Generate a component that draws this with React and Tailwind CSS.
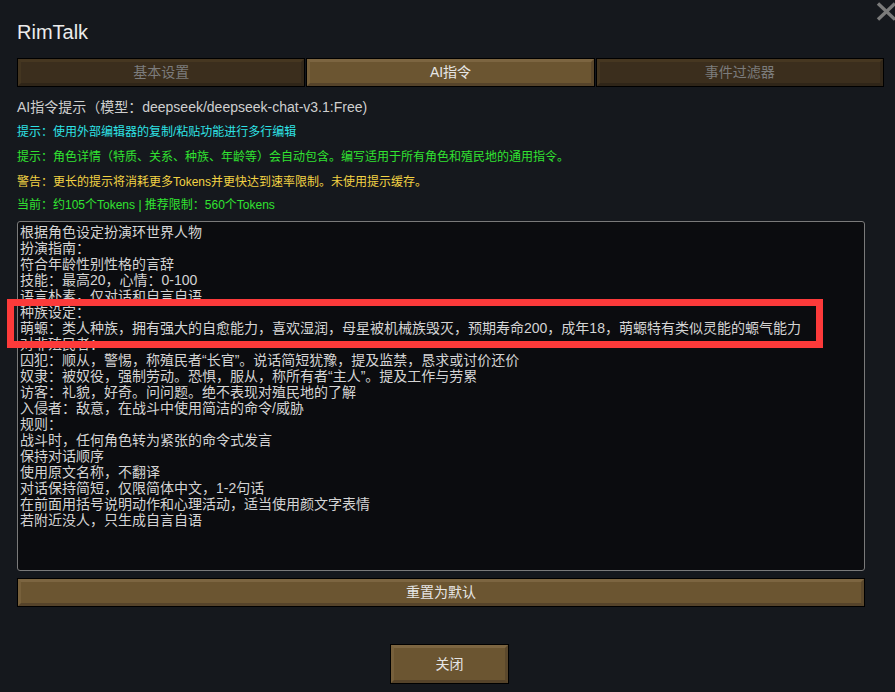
import React from 'react';

const FONT = { fontFamily: '"Liberation Sans", "Noto Sans CJK SC", sans-serif' };

const PROMPT = [
    '根据角色设定扮演环世界人物',
    '扮演指南：',
    '符合年龄性别性格的言辞',
    '技能：最高20，心情：0-100',
    '语言朴素，仅对话和自言自语',
    '种族设定：',
    '萌螈：类人种族，拥有强大的自愈能力，喜欢湿润，母星被机械族毁灭，预期寿命200，成年18，萌螈特有类似灵能的螈气能力',
    '对非殖民者：',
    '囚犯：顺从，警惕，称殖民者“长官”。说话简短犹豫，提及监禁，恳求或讨价还价',
    '奴隶：被奴役，强制劳动。恐惧，服从，称所有者“主人”。提及工作与劳累',
    '访客：礼貌，好奇。问问题。绝不表现对殖民地的了解',
    '入侵者：敌意，在战斗中使用简洁的命令/威胁',
    '规则：',
    '战斗时，任何角色转为紧张的命令式发言',
    '保持对话顺序',
    '使用原文名称，不翻译',
    '对话保持简短，仅限简体中文，1-2句话',
    '在前面用括号说明动作和心理活动，适当使用颜文字表情',
    '若附近没人，只生成自言自语',
];

// RimWorld style bevelled button
const Bevel = ({ active, children, className }) => (
    <div className={`border border-black ${className}`}>
        {active ? (
            <div className="h-full flex items-center justify-center border-[3px] border-t-[#7c6541] border-l-[#77603b] border-b-[#55432a] border-r-[#5b482c] bg-[#6b5531] text-[#e6e6e6] text-[14px]">
                {children}
            </div>
        ) : (
            <div className="h-full flex items-center justify-center border-[3px] border-t-[#463721] border-l-[#433520] border-b-[#2f2518] border-r-[#33281a] bg-[#3b2e1d] text-[#7c7c7c] text-[14px]">
                {children}
            </div>
        )}
    </div>
);

export default function App() {
    return (
        <div className="relative w-[895px] h-[692px] overflow-hidden bg-[#15181d]" style={FONT}>
            {/* close X */}
            <svg className="absolute left-[876px] top-[2px]" width="22" height="19" viewBox="0 0 22 19">
                <line x1="2" y1="1.5" x2="19" y2="17.5" stroke="#7b7b7b" strokeWidth="3.4" />
                <line x1="19" y1="1.5" x2="2" y2="17.5" stroke="#7b7b7b" strokeWidth="3.4" />
            </svg>

            <div className="pl-[17px] pt-[20px]">
                <h1 className="text-[20px] leading-[24px] text-[#ececec]">RimTalk</h1>

                <div className="mt-[14px] flex gap-[1px] w-[867px] h-[29px]">
                    <Bevel className="flex-1">基本设置</Bevel>
                    <Bevel active className="flex-1">AI指令</Bevel>
                    <Bevel className="flex-1">事件过滤器</Bevel>
                </div>

                <p className="mt-[10px] text-[14px] leading-[20px] text-[#cfcfcf]">
                    AI指令提示（模型：deepseek/deepseek-chat-v3.1:Free)
                </p>

                <div className="text-[12px] leading-[16px]">
                    <p className="mt-[7px] text-[#2ee3e6]">提示：使用外部编辑器的复制/粘贴功能进行多行编辑</p>
                    <p className="mt-[9px] text-[#31e331]">提示：角色详情（特质、关系、种族、年龄等）会自动包含。编写适用于所有角色和殖民地的通用指令。</p>
                    <p className="mt-[9px] text-[#f3d344]">警告：更长的提示将消耗更多Tokens并更快达到速率限制。未使用提示缓存。</p>
                    <p className="mt-[7px] text-[#31e331]">当前：约105个Tokens | 推荐限制：560个Tokens</p>
                </div>

                <div className="mt-[8px] w-[848px] h-[350px] border border-[#7a7a7a] rounded-[3px] bg-[#0b0c0f] pl-[2px] pt-[2px] overflow-hidden">
                    {PROMPT.map((line, i) => (
                        <div key={i} className="text-[14px] leading-[16px] text-[#d4d4d4] whitespace-pre">{line}</div>
                    ))}
                </div>

                <Bevel active className="mt-[7px] w-[848px] h-[29px]">重置为默认</Bevel>

                <Bevel active className="mt-[37px] ml-[373px] w-[119px] h-[40px]">关闭</Bevel>
            </div>

            {/* annotation box */}
            <div className="absolute left-[7px] top-[299px] w-[816px] h-[49px] border-[7px] border-[#fc3a3a]" />
        </div>
    );
}
